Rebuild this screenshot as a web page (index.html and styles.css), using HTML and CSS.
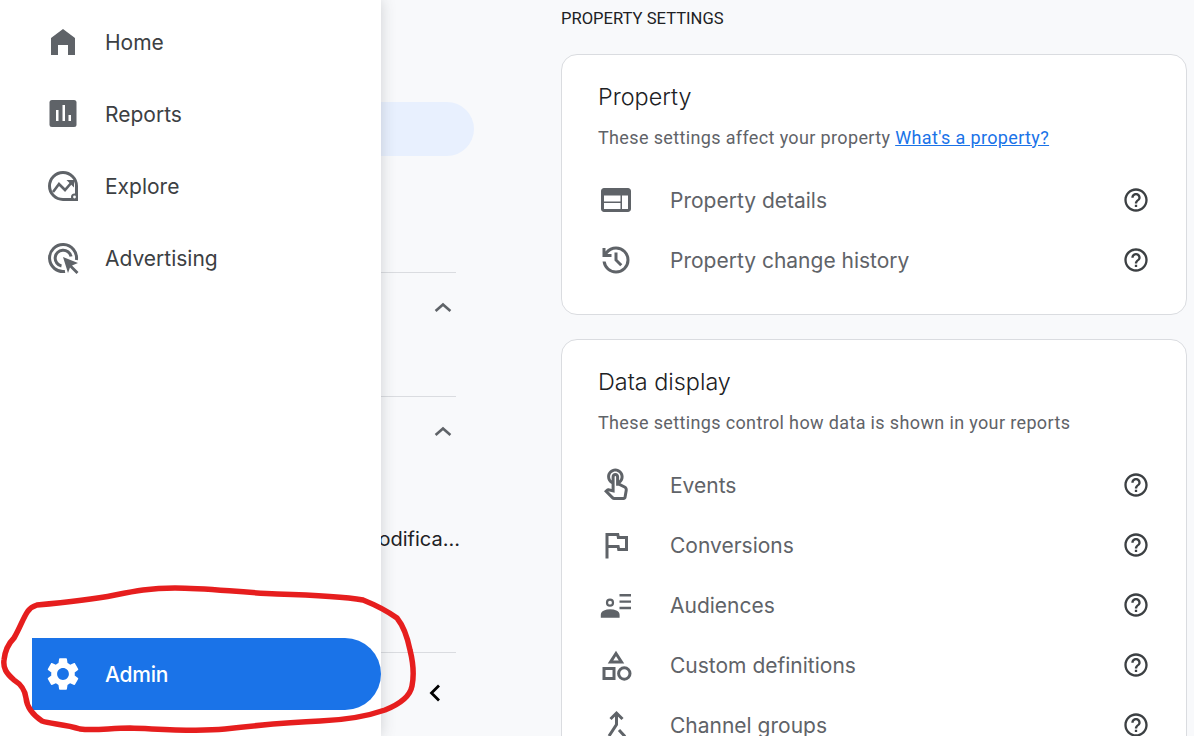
FILE: index.html
```html
<!DOCTYPE html>
<html lang="en">
<head>
<meta charset="utf-8" />
<title>Admin</title>
<link rel="stylesheet" href="styles.css">
</head>
<body>
<svg class="defs" width="0" height="0">
	<symbol id="help" viewBox="0 0 24 24"><path d="M11 18h2v-2h-2v2zm1-16C6.48 2 2 6.48 2 12s4.48 10 10 10 10-4.48 10-10S17.52 2 12 2zm0 18c-4.41 0-8-3.59-8-8s3.59-8 8-8 8 3.59 8 8-3.59 8-8 8zm0-14c-2.21 0-4 1.79-4 4h2c0-1.1.9-2 2-2s2 .9 2 2c0 2-3 1.75-3 5h2c0-2.25 3-2.5 3-5 0-2.21-1.79-4-4-4z"/></symbol>
	<symbol id="chev-up" viewBox="0 0 24 24"><path d="M3.600 16 11 9.500l7.400 6.500" fill="none" stroke="#5f6368" stroke-width="2.600"/></symbol>
</svg>
<div class="app">
	<nav class="nav">
		<div class="nav-list">
			<a class="nav-item">
				<svg class="ico" viewBox="0 0 36 36"><path d="M18 5 30 14V31H23V21H13V31H6V14Z"/></svg>
				<span>Home</span>
			</a>
			<a class="nav-item">
				<svg class="ico" viewBox="0 0 36 36"><rect x="4.500" y="4" width="27" height="27" rx="2.500"/><path d="M11 14h2.500v11H11zM17.500 9h2.500v16h-2.500zM23.500 19H26v6h-2.500z" fill="#fff"/></svg>
				<span>Reports</span>
			</a>
			<a class="nav-item">
				<svg class="ico" viewBox="0 0 36 36"><path d="M18 4.500A13.500 13.500 0 0 0 18 31.500H31.500V18A13.500 13.500 0 0 0 18 4.500Z" fill="none" stroke="#5f6368" stroke-width="3"/><path d="M8 24l6-8 6 6 7-8" fill="none" stroke="#5f6368" stroke-width="2.600"/><path d="M21.500 12H29v7.500Z"/><circle cx="29.500" cy="29" r="3.500"/><circle cx="29.500" cy="29" r="1.400" fill="#fff"/></svg>
				<span>Explore</span>
			</a>
			<a class="nav-item">
				<svg class="ico" viewBox="0 0 36 36"><path d="M20 31.400A13.500 13.500 0 1 1 31.400 20M16.500 26A8 8 0 1 1 26 16.500" fill="none" stroke="#5f6368" stroke-width="3"/><path d="M18 17 33 23 27 25.500 33.500 32 31.500 34 25 27.500 23 33Z"/></svg>
				<span>Advertising</span>
			</a>
		</div>
		<a class="nav-item nav-admin">
			<svg class="ico" viewBox="1 1 22 22"><path d="M19.140 12.940c.04-.3.06-.61.06-.94 0-.32-.02-.64-.07-.94l2.030-1.580c.18-.14.23-.41.12-.61l-1.920-3.320c-.12-.22-.37-.29-.59-.22l-2.390.96c-.5-.38-1.030-.7-1.620-.94l-.36-2.540c-.04-.24-.24-.41-.48-.41h-3.840c-.24 0-.43.17-.47.41l-.36 2.540c-.59.24-1.130.57-1.620.94l-2.390-.96c-.22-.08-.47 0-.59.22L2.740 8.870c-.12.21-.08.47.12.61l2.030 1.580c-.05.3-.09.63-.09.94s.02.64.07.94l-2.030 1.580c-.18.14-.23.41-.12.61l1.920 3.320c.12.22.37.29.59.22l2.390-.96c.5.38 1.030.7 1.620.94l.36 2.540c.05.24.24.41.48.41h3.840c.24 0 .44-.17.47-.41l.36-2.540c.59-.24 1.130-.56 1.620-.94l2.390.96c.22.08.47 0 .59-.22l1.920-3.320c.12-.22.07-.47-.12-.61l-2.010-1.580zM12 15.600c-1.980 0-3.600-1.620-3.600-3.600s1.620-3.600 3.600-3.600 3.600 1.620 3.600 3.600-1.620 3.600-3.600 3.600z"/></svg>
			<span>Admin</span>
		</a>
	</nav>

	<aside class="side">
		<div class="side-pill"></div>
		<div class="side-group"><svg class="chev"><use href="#chev-up"/></svg></div>
		<div class="side-group"><svg class="chev"><use href="#chev-up"/></svg></div>
		<div class="side-text"><span>Data modifica...</span></div>
		<div class="side-foot">
			<svg class="back" viewBox="0 0 24 24"><path d="M16 4.500 8.500 12l7.500 7.500" fill="none" stroke="#000" stroke-width="2.800"/></svg>
		</div>
	</aside>

	<main class="main">
		<h2 class="section-title">PROPERTY SETTINGS</h2>

		<section class="card">
			<h3 class="card-title">Property</h3>
			<p class="card-sub">These settings affect your property <a class="link">What's a property?</a></p>
			<div class="row">
				<svg class="ico" viewBox="0 0 24 24"><path d="M20 4H4c-1.100 0-1.990.9-1.990 2L2 18c0 1.100.9 2 2 2h16c1.100 0 2-.9 2-2V6c0-1.100-.9-2-2-2zm-5 14H4v-4h11v4zm0-5H4V9h11v4zm5 5h-4V9h4v9z"/></svg>
				<span class="row-label">Property details</span>
				<svg class="help"><use href="#help"/></svg>
			</div>
			<div class="row">
				<svg class="ico" viewBox="0 0 24 24"><path d="M12 21q-3.450 0-6.013-2.288T3.050 13H5.100q.35 2.600 2.313 4.300T12 19q2.925 0 4.963-2.038T19 12q0-2.925-2.038-4.963T12 5q-1.725 0-3.225.8T6.250 8H9v2H3V4h2v2.350q1.275-1.600 3.113-2.475T12 3q3.750 0 6.375 2.625T21 12q0 3.750-2.625 6.375T12 21Zm2.800-4.800L11 12.400V7h2v4.600l3.200 3.200-1.400 1.400Z"/></svg>
				<span class="row-label">Property change history</span>
				<svg class="help"><use href="#help"/></svg>
			</div>
		</section>

		<section class="card">
			<h3 class="card-title">Data display</h3>
			<p class="card-sub">These settings control how data is shown in your reports</p>
			<div class="row">
				<svg class="ico" viewBox="0 0 24 24"><path d="M18.190 12.440l-3.240-1.620c1.290-1 2.120-2.560 2.120-4.320 0-3.030-2.470-5.500-5.500-5.500s-5.500 2.470-5.500 5.500c0 2.130 1.220 3.980 3 4.890v3.260c-2.150-.46-2.020-.44-2.260-.44-.53 0-1.030.21-1.410.59L4 16.220l5.090 5.090C9.520 21.750 10.120 22 10.740 22h6.300c.98 0 1.810-.7 1.970-1.670l.8-4.710c.22-1.300-.43-2.580-1.620-3.180zm-.35 2.850l-.8 4.710h-6.300c-.09 0-.17-.04-.24-.1l-3.680-3.680 4.250.89V6.500c0-.28.22-.5.5-.5s.5.22.5.5v6h1.760l3.460 1.730c.4.2.62.63.55 1.060zM8.070 6.500c0-1.930 1.570-3.500 3.500-3.500s3.500 1.570 3.500 3.500c0 .95-.38 1.810-1 2.440V6.500c0-1.380-1.120-2.500-2.500-2.500s-2.500 1.120-2.500 2.500v2.440c-.62-.63-1-1.490-1-2.440z"/></svg>
				<span class="row-label">Events</span>
				<svg class="help"><use href="#help"/></svg>
			</div>
			<div class="row">
				<svg class="ico" viewBox="0 0 24 24"><path d="M12.360 6l.08.39.32 1.610H18v6h-3.360l-.08-.39-.32-1.610H7V6h5.360M14 4H5v17h2v-7h5.600l.4 2h7V6h-5.600L14 4z"/></svg>
				<span class="row-label">Conversions</span>
				<svg class="help"><use href="#help"/></svg>
			</div>
			<div class="row">
				<svg class="ico" viewBox="0 0 36 36"><circle cx="12" cy="15.700" r="3"  fill="none" stroke="#5f6368" stroke-width="2.200"/><path d="M4 29.500v-1.800c0-2.700 4-4.200 8.200-4.200s8.200 1.500 8.200 4.200v1.800Z" stroke="#5f6368" stroke-width="2.400"/><path d="M21.500 7h11.500v2.400H21.500zM21.500 13.400h11.500v2.400H21.500zM21.500 19.800h11.500v2.400H21.500z"/></svg>
				<span class="row-label">Audiences</span>
				<svg class="help"><use href="#help"/></svg>
			</div>
			<div class="row">
				<svg class="ico" viewBox="0 0 36 36"><path d="M18 6.500 23.500 15h-11Z" fill="none" stroke="#5f6368" stroke-width="3"/><rect x="6" y="21.500" width="10" height="10" fill="none" stroke="#5f6368" stroke-width="3"/><circle cx="26.300" cy="26.500" r="5.700" fill="none" stroke="#5f6368" stroke-width="3"/></svg>
				<span class="row-label">Custom definitions</span>
				<svg class="help"><use href="#help"/></svg>
			</div>
			<div class="row">
				<svg class="ico" viewBox="0 0 36 36"><path d="M12.500 12 18.500 6l6 6M18.500 6v11.500L11 29M21 23l6 6.500" fill="none" stroke="#5f6368" stroke-width="3"/></svg>
				<span class="row-label">Channel groups</span>
				<svg class="help"><use href="#help"/></svg>
			</div>
		</section>
	</main>
</div>

<!-- hand drawn marker ring round the Admin button -->
<svg class="marker" viewBox="0 0 1194 736"><path d="M37 605C60 603 90 600 115 595C135 591 150 588 175 588C205 588 235 592 277 594C310 595 340 596 363 600C378 606 390 613 397 618C405 628 408 640 410 650C413 662 414 676 412 686C410 697 400 704 385 710C365 717 345 720 320 721C290 722 260 725 225 729C195 732 160 729 130 728C110 728 95 731 80 729C65 724 50 724 42 721C33 715 27 708 26 698C25 690 22 685 14 680C6 673 3 668 4 660C5 650 10 642 14 638C20 628 23 618 28 611C31 607 34 606 37 605Z" /></svg>
</body>
</html>
```

FILE: styles.css
```css
*{box-sizing:border-box;}
html, body{margin:0; padding:0; height:100%; overflow:hidden;}
body{background:#f8f9fb; font-family:"Roboto", sans-serif; color:#3c4043;}
.defs{display:block; height:0;}
a{text-decoration:none;}
.app{display:flex; height:736px;}
.ico{width:36px; height:36px; flex:none; fill:#5f6368;}

.nav{position:relative; z-index:2; flex:none; width:381px; height:100%; background:#fff; box-shadow:0 0 14px rgba(60,64,67,.22); display:flex; flex-direction:column; justify-content:space-between; padding:6px 0 26px;}
.nav-item{display:flex; align-items:center; height:72px; margin-left:32px; padding-left:13px; gap:24px; font-family:"Inter", sans-serif; font-size:21px; color:#3c4043;}
.nav-admin{background:#1a73e8; color:#fff; font-weight:500; letter-spacing:-.2px; border-radius:0 36px 36px 0;}
.nav-admin .ico{fill:#fff;}

.side{flex:none; width:180px; padding-top:102px;}
.side-pill{height:54px; width:93px; background:#e8f0fe; border-radius:0 27px 27px 0; margin-bottom:116px;}
.side-group{width:75px; height:124px; border-top:1px solid #dadce0; padding-top:22px; display:flex; justify-content:flex-end;}
.chev{width:24px; height:24px; flex:none;}
.side-text{width:79px; height:38px; overflow:hidden; display:flex; justify-content:flex-end; align-items:center; white-space:nowrap; font-family:"Inter", sans-serif; font-size:20px; color:#202124; margin-bottom:94px;}
.side-text span{flex:none;}
.side-foot{width:75px; height:80px; border-top:1px solid #dadce0; display:flex; align-items:center; padding-left:42px;}
.back{width:24px; height:24px; flex:none;}

.main{flex:1; min-width:0; padding:7px 7px 0 0;}
.section-title{margin:0 0 23px; font-size:16.6px; line-height:24px; font-weight:400; color:#202124;}
.card{background:#fff; border:1px solid #dadce0; border-radius:16px; padding:26px 36px 24px; margin-bottom:24px;}
.card-title{margin:0; font-family:"Inter", sans-serif; font-size:23.4px; line-height:32px; font-weight:300; color:#202124;}
.card-sub{margin:13px 0 20px; font-size:18px; line-height:24px; letter-spacing:.36px; color:#5f6368;}
.link{color:#1a73e8; text-decoration:underline;}
.row{display:flex; align-items:center; height:60px; gap:36px;}
.row-label{flex:1; font-family:"Inter", sans-serif; font-size:21px; color:#5f6368;}
.help{width:28px; height:28px; flex:none; fill:#3c4043;}

.marker{position:absolute; left:0; top:0; width:1194px; height:736px; z-index:3; pointer-events:none; fill:none; stroke:#e61e1e; stroke-width:5.5;}
```
